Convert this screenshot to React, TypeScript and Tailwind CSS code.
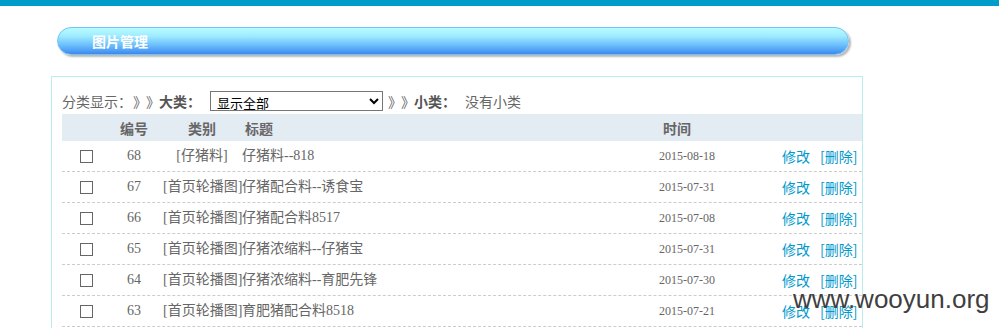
import React from "react";

const rows = [
  { id: 68, cat: "[仔猪料]", title: "仔猪料--818", date: "2015-08-18" },
  { id: 67, cat: "[首页轮播图]", title: "仔猪配合料--诱食宝", date: "2015-07-31" },
  { id: 66, cat: "[首页轮播图]", title: "仔猪配合料8517", date: "2015-07-08" },
  { id: 65, cat: "[首页轮播图]", title: "仔猪浓缩料--仔猪宝", date: "2015-07-31" },
  { id: 64, cat: "[首页轮播图]", title: "仔猪浓缩料--育肥先锋", date: "2015-07-30" },
  { id: 63, cat: "[首页轮播图]", title: "育肥猪配合料8518", date: "2015-07-21" },
];

const cols = "grid grid-cols-[43px_58px_78px_418px_123px_1fr] items-center";

function Arrows() {
  return (
    <span className="flex w-[26px]">
      <span className="inline-block w-[13px] text-center">》</span>
      <span className="inline-block w-[13px] text-center">》</span>
    </span>
  );
}

export default function App() {
  return (
    <div className="relative min-h-[328px] bg-white font-['Liberation_Serif','Noto_Sans_CJK_SC',serif] text-[#666]">
      <div className="h-[6px] bg-[#009dcb]" />

      {/* title bar */}
      <div className="mt-[21px] ml-[57px] w-[792px] h-[28px] rounded-full border border-[#72c4f6] bg-[linear-gradient(to_bottom,#b8fbff_0%,#a0ecff_30%,#6cbefc_66%,#4a9af6_90%,#3f86e6_100%)] shadow-[2px_2px_2px_rgba(0,0,0,0.28)] flex items-center pl-[34px]">
        <span className="text-[14px] font-bold text-white font-['Noto_Sans_CJK_SC',sans-serif] leading-none">
          图片管理
        </span>
      </div>

      {/* panel */}
      <div className="mt-[21px] ml-[51px] w-[812px] border border-[#b8ecef] pb-4">
        <div className="mt-[14px] ml-[10px] h-[20px] flex items-center text-[14px] font-['Noto_Sans_CJK_SC',sans-serif] leading-none whitespace-nowrap">
          <span className="w-[71px]">分类显示：</span>
          <Arrows />
          <span className="w-[43px] font-bold text-[#555]">大类：</span>
          <select className="ml-[8px] w-[173px] h-[20px] border border-[#767676] bg-white text-[13px] text-black pl-[2px]">
            <option>显示全部</option>
          </select>
          <span className="ml-[5px]">
            <Arrows />
          </span>
          <span className="w-[44px] font-bold text-[#555]">小类：</span>
          <span className="ml-[7px]">没有小类</span>
        </div>

        <div className="ml-[10px] mt-[3px]">
          <div className={`${cols} h-[27px] bg-[#e3ebf3] text-[14px] font-bold font-['Noto_Sans_CJK_SC',sans-serif] leading-none`}>
            <span />
            <span className="text-center">编号</span>
            <span className="text-center">类别</span>
            <span className="pl-[4px]">标题</span>
            <span className="pl-[4px]">时间</span>
            <span />
          </div>

          {rows.map((r) => (
            <div
              key={r.id}
              className={`${cols} h-[31px] border-b border-dashed border-[#cccccc] text-[14px] leading-none whitespace-nowrap`}
            >
              <span className="pl-[18px] flex">
                <input
                  type="checkbox"
                  className="appearance-none w-[13px] h-[13px] border border-[#666] bg-white"
                />
              </span>
              <span className="text-center">{r.id}</span>
              <span className="text-center">{r.cat}</span>
              <span className="pl-[1px]">{r.title}</span>
              <span className="text-[12px]">{r.date}</span>
              <span className="flex gap-[10px] text-[#0099cc] font-['Noto_Sans_CJK_SC',sans-serif]">
                <a>修改</a>
                <a>[删除]</a>
              </span>
            </div>
          ))}
        </div>
      </div>

      <div className="absolute left-[793px] top-[286px] text-[26px] leading-none text-[#3f3f3f] font-['Liberation_Sans',Arial,sans-serif]">
        www.wooyun.org
      </div>
    </div>
  );
}
